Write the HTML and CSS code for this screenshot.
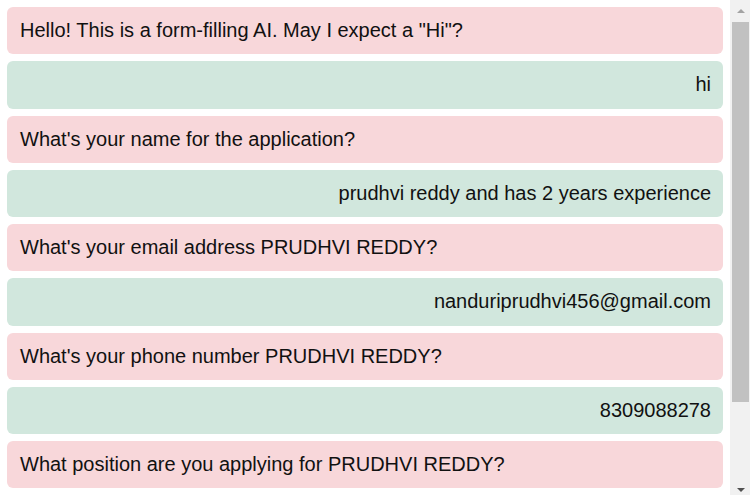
FILE: index.html
```html
<!DOCTYPE html>
<html>
<head>
<meta charset="utf-8">
<link rel="stylesheet" href="styles.css">
</head>
<body>
<div class="frame">
  <div class="chat">
    <div class="msg bot">Hello! This is a form-filling AI. May I expect a "Hi"?</div>
    <div class="msg user">hi</div>
    <div class="msg bot">What's your name for the application?</div>
    <div class="msg user">prudhvi reddy and has 2 years experience</div>
    <div class="msg bot">What's your email address PRUDHVI REDDY?</div>
    <div class="msg user">nanduriprudhvi456@gmail.com</div>
    <div class="msg bot">What's your phone number PRUDHVI REDDY?</div>
    <div class="msg user">8309088278</div>
    <div class="msg bot">What position are you applying for PRUDHVI REDDY?</div>
  </div>
  <div class="scrollbar">
    <div class="arrow up"></div>
    <div class="track"><div class="thumb"></div></div>
    <div class="arrow down"></div>
  </div>
</div>
</body>
</html>
```
FILE: styles.css
```css
html, body {
  margin: 0;
  padding: 0;
  background: #ffffff;
}
.frame {
  display: flex;
  width: 750px;
  height: 495px;
  overflow: hidden;
}
.chat {
  flex: 1;
  padding: 7px;
  display: flex;
  flex-direction: column;
  gap: 7px;
  font-family: "Liberation Sans", Arial, sans-serif;
  font-size: 20px;
  color: #111;
}
.msg {
  height: 47.25px;
  box-sizing: border-box;
  padding: 0 12px 0 13px;
  border-radius: 6px;
  display: flex;
  align-items: center;
  flex-shrink: 0;
}
.bot {
  background: #f8d7da;
}
.user {
  background: #d1e7dd;
  justify-content: flex-end;
}
.scrollbar {
  width: 20px;
  height: 495px;
  background: #f1f1f1;
  display: flex;
  flex-direction: column;
}
.arrow {
  height: 22px;
  display: flex;
  align-items: center;
  justify-content: center;
  padding-left: 1px;
}
.arrow.up::before {
  content: "";
  border-left: 4px solid transparent;
  border-right: 4px solid transparent;
  border-bottom: 4px solid #a3a3a3;
}
.arrow.down {
  height: 22px;
  align-items: flex-end;
  padding-bottom: 3px;
  box-sizing: border-box;
}
.arrow.down::before {
  content: "";
  border-left: 4px solid transparent;
  border-right: 4px solid transparent;
  border-top: 4px solid #505050;
}
.track {
  flex: 1;
}
.thumb {
  margin: 0 1px 0 2px;
  height: 380px;
  background: #c1c1c1;
}
```
